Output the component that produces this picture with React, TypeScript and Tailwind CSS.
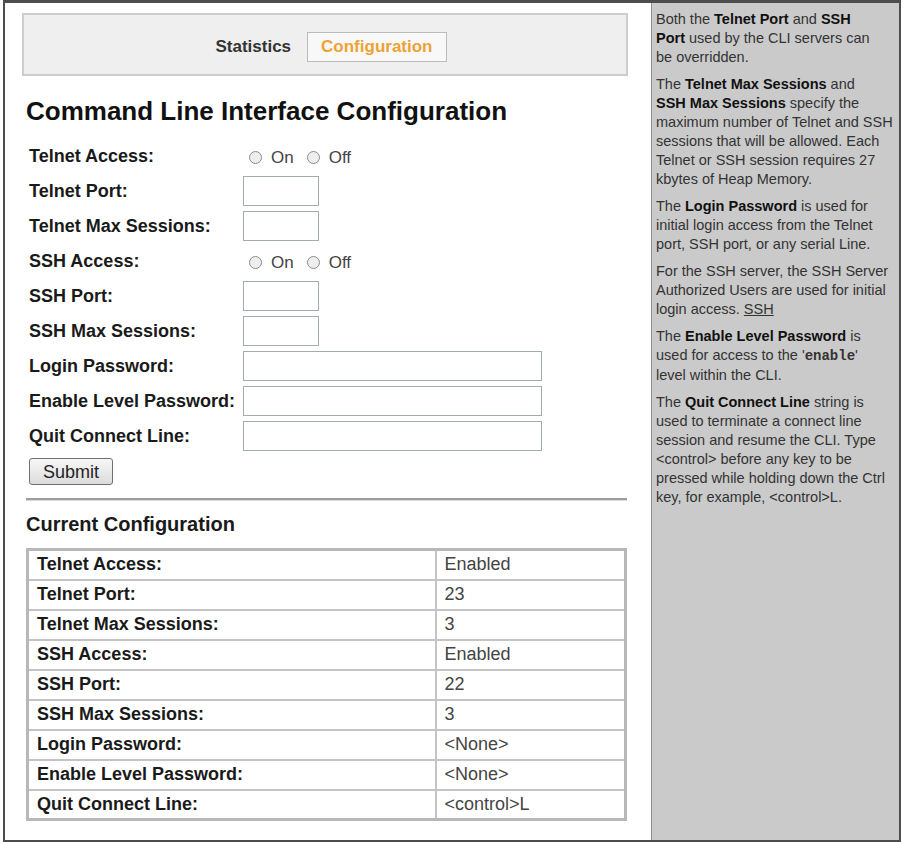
import React from "react";

type Field = { label: string; kind: "radio" | "short" | "long" };

const fields: Field[] = [
  { label: "Telnet Access:", kind: "radio" },
  { label: "Telnet Port:", kind: "short" },
  { label: "Telnet Max Sessions:", kind: "short" },
  { label: "SSH Access:", kind: "radio" },
  { label: "SSH Port:", kind: "short" },
  { label: "SSH Max Sessions:", kind: "short" },
  { label: "Login Password:", kind: "long" },
  { label: "Enable Level Password:", kind: "long" },
  { label: "Quit Connect Line:", kind: "long" },
];

const current: [string, string][] = [
  ["Telnet Access:", "Enabled"],
  ["Telnet Port:", "23"],
  ["Telnet Max Sessions:", "3"],
  ["SSH Access:", "Enabled"],
  ["SSH Port:", "22"],
  ["SSH Max Sessions:", "3"],
  ["Login Password:", "<None>"],
  ["Enable Level Password:", "<None>"],
  ["Quit Connect Line:", "<control>L"],
];

function Radio({ label }: { label: string }) {
  return (
    <span className="flex items-center">
      <span className="h-[13px] w-[13px] rounded-full border border-[#8c8c8c] bg-[#eeeeee]" />
      <span className="ml-[9px] text-[17px] text-[#444]">{label}</span>
    </span>
  );
}

function FormRow({ field }: { field: Field }) {
  return (
    <div className="flex h-[30px] items-center">
      <div className="w-[214px] shrink-0 text-[18px] font-bold text-[#1a1a1a]">{field.label}</div>
      {field.kind === "radio" && (
        <div className="flex items-center gap-[13px] pl-[6px] pt-[3px]">
          <Radio label="On" />
          <Radio label="Off" />
        </div>
      )}
      {field.kind === "short" && <input className="h-[30px] w-[76px] border border-[#a3abb3] bg-white" />}
      {field.kind === "long" && <input className="h-[30px] w-[299px] border border-[#a3abb3] bg-white" />}
    </div>
  );
}

function HelpPanel() {
  return (
    <div className="w-[248px] shrink-0 overflow-hidden whitespace-nowrap border-l border-[#8f8f8f] bg-[#cacaca] pl-[4px] pt-[7px] text-[14.5px] leading-[19px] text-[#333]">
      <p className="mb-[8px]">
        Both the <b className="text-[#111]">Telnet Port</b> and <b className="text-[#111]">SSH</b>
        <br />
        <b className="text-[#111]">Port</b> used by the CLI servers can
        <br />
        be overridden.
      </p>
      <p className="mb-[8px]">
        The <b className="text-[#111]">Telnet Max Sessions</b> and
        <br />
        <b className="text-[#111]">SSH Max Sessions</b> specify the
        <br />
        maximum number of Telnet and SSH
        <br />
        sessions that will be allowed. Each
        <br />
        Telnet or SSH session requires 27
        <br />
        kbytes of Heap Memory.
      </p>
      <p className="mb-[8px]">
        The <b className="text-[#111]">Login Password</b> is used for
        <br />
        initial login access from the Telnet
        <br />
        port, SSH port, or any serial Line.
      </p>
      <p className="mb-[8px]">
        For the SSH server, the SSH Server
        <br />
        Authorized Users are used for initial
        <br />
        login access. <span className="underline">SSH</span>
      </p>
      <p className="mb-[8px]">
        The <b className="text-[#111]">Enable Level Password</b> is
        <br />
        used for access to the '<span className="font-['Liberation_Mono',monospace] text-[14px] font-bold">enable</span>'
        <br />
        level within the CLI.
      </p>
      <p>
        The <b className="text-[#111]">Quit Connect Line</b> string is
        <br />
        used to terminate a connect line
        <br />
        session and resume the CLI. Type
        <br />
        {"<control>"} before any key to be
        <br />
        pressed while holding down the Ctrl
        <br />
        key, for example, {"<control>L"}.
      </p>
    </div>
  );
}

export default function App() {
  return (
    <div className="h-[843px] w-[903px] overflow-hidden bg-white font-['Liberation_Sans',Arial,sans-serif] text-[#1a1a1a]">
      <div className="ml-[3px] flex h-[842px] w-[898px] border-x-2 border-b-2 border-t-[3px] border-[#4d4d4d]">
        <div className="w-[646px] shrink-0 pl-[17px] pt-[10px]">
          {/* tab bar */}
          <div className="flex h-[63px] w-[606px] items-center justify-center gap-[16px] border-2 border-[#cdcdcd] bg-[#efefef] pl-[12px] pt-[4px]">
            <span className="text-[17px] font-bold text-[#333]">Statistics</span>
            <span className="flex h-[30px] items-center border border-[#bcbcbc] bg-[#f8f8f8] px-[13px] text-[17px] font-bold text-[#eea236]">
              Configuration
            </span>
          </div>

          <div className="ml-[4px] w-[601px]">
            <h1 className="mt-[20px] text-[26px] font-bold leading-[30px] text-[#111]">
              Command Line Interface Configuration
            </h1>

            <div className="mt-[15px] flex flex-col gap-[5px] pl-[3px]">
              {fields.map((f) => (
                <FormRow key={f.label} field={f} />
              ))}
            </div>

            <button className="ml-[3px] mt-[7px] h-[27px] w-[84px] rounded-[3px] border border-[#707070] bg-linear-to-b from-[#f7f7f7] to-[#dcdcdc] text-[18px] text-[#222]">
              Submit
            </button>

            <div className="mt-[13px] border-t-2 border-b border-t-[#9d9d9d] border-b-[#dadada]" />

            <h2 className="mt-[11px] text-[20px] font-bold leading-[24px] text-[#1a1a1a]">Current Configuration</h2>

            <table className="mt-[12px] w-[601px] border-collapse border-[3px] border-[#b8b8b8]">
              <tbody>
                {current.map(([k, v]) => (
                  <tr key={k} className="h-[30px]">
                    <td className="w-[408px] border-2 border-[#c4c4c4] pl-[8px] text-[18px] font-bold text-[#1a1a1a]">{k}</td>
                    <td className="border-2 border-[#c4c4c4] pl-[8px] text-[18px] text-[#444]">{v}</td>
                  </tr>
                ))}
              </tbody>
            </table>
          </div>
        </div>
        <HelpPanel />
      </div>
    </div>
  );
}
